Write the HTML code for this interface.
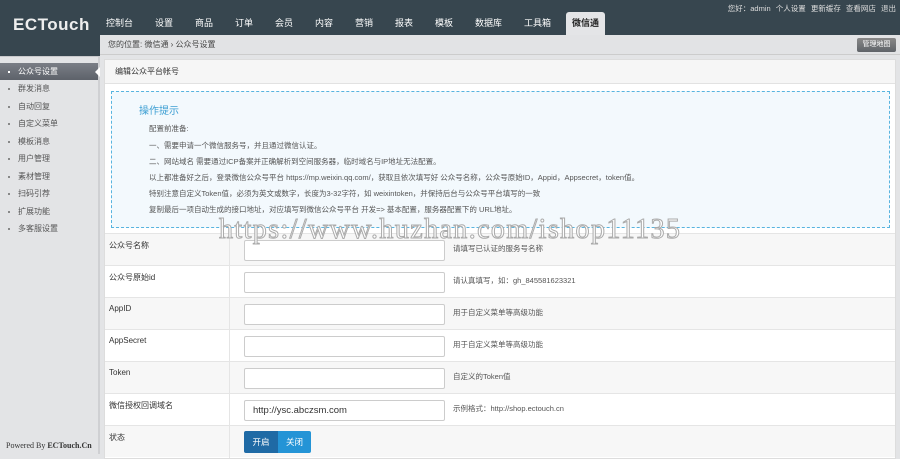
<!DOCTYPE html>
<html><head><meta charset="utf-8"><style>
*{margin:0;padding:0;box-sizing:border-box}
body{width:900px;height:454px;overflow:hidden;background:#e3e4e6;font-family:"Liberation Sans","Noto Sans CJK SC",sans-serif;font-size:8px;color:#444;position:relative}
.top{position:absolute;left:0;top:0;width:900px;height:35px;background:#37464f}
.topl{position:absolute;left:0;top:0;width:100px;height:56px;background:#37464f}
.logo{position:absolute;left:13px;top:15px;color:#eee;font-size:17px;font-weight:bold;letter-spacing:0.5px}
.nav{position:absolute;left:106px;top:16px;color:#fff;font-size:9px}
.nav span{position:absolute;white-space:nowrap}
.tab{position:absolute;left:566px;top:12px;width:39px;height:23px;background:#e4e5e7;border-radius:3px 3px 0 0;color:#222;font-size:9px;font-weight:bold;text-align:center;line-height:22px}
.tr{position:absolute;right:4px;top:3px;color:#ddd;font-size:7.5px;word-spacing:3px}
.side{position:absolute;left:0;top:56px;width:100px;height:398px;background:#e3e4e6;border-right:2px solid #cfd0d3;border-top:1px solid #c8c9cc}
.side div{position:absolute;left:0;width:98px;height:17px;line-height:17px;padding-left:18px;font-size:8px;color:#555}
.side div:before{content:"";position:absolute;left:8px;top:8px;width:2px;height:2px;background:#888}
.side .act{background:linear-gradient(#7a7e86,#5d626a);color:#fff}
.side .act:before{background:#fff}
.side .act:after{content:"";position:absolute;right:-2px;top:4px;border:5px solid transparent;border-right-color:#fff}
.crumb{position:absolute;left:100px;top:35px;width:800px;height:20px;background:#e2e3e5;border-bottom:1px solid #ccc;font-size:8px;line-height:20px;padding-left:8px;color:#444}
.mapbtn{position:absolute;right:4px;top:38px;width:39px;height:14px;background:linear-gradient(#888,#5f6368);border-radius:2px;color:#fff;font-size:7px;text-align:center;line-height:14px}
.panel{position:absolute;left:104px;top:59px;width:792px;height:400px;background:#fff;border:1px solid #ddd}
.ph{height:24px;background:#f6f6f6;border-bottom:1px solid #e2e2e2;line-height:24px;padding-left:10px;font-size:8px;color:#333}
.tip{position:absolute;left:6px;top:31px;width:779px;height:137px;background:#f3f9fd;border:1px dashed #58b4df}
.tip h3{position:absolute;left:27px;top:10px;font-size:10px;font-weight:normal;color:#3d9fd3}
.tip p{position:absolute;left:37px;font-size:7.5px;color:#555;white-space:nowrap}
.wm{position:absolute;left:219px;top:214px;font-family:"Liberation Serif",serif;font-size:28px;color:#fff;-webkit-text-stroke:1px #aaa;letter-spacing:1.4px;white-space:nowrap}
.row{position:absolute;left:105px;width:790px;height:32px;border-top:1px solid #e5e5e5}
.row.g{background:#f7f7f7}
.row .l{position:absolute;left:4px;top:6px;font-size:8px;color:#333}
.row .sep{position:absolute;left:124px;top:0;width:1px;height:32px;background:#e5e5e5}
.row .in{position:absolute;left:139px;top:6px;width:201px;height:21px;border:1px solid #ccc;border-radius:2px;background:#fff;font-size:9.5px;color:#333;padding-left:8px;line-height:19px}
.row .h{position:absolute;left:348px;top:9px;font-size:7.5px;color:#555}
.sw{position:absolute;left:139px;top:5px;height:22px;width:67px;border-radius:2px;overflow:hidden;font-size:8.5px;color:#fff}
.sw span{float:left;width:34px;height:22px;line-height:22px;text-align:center;background:#1f6aa5}
.sw span+span{width:33px;background:#2494d6}
.pw{position:absolute;left:6px;top:441px;font-family:"Liberation Serif",serif;font-size:8px;color:#333}
</style></head><body>
<div class="top"></div>
<div class="topl"><div class="logo">ECTouch</div></div>
<div class="nav">
<span style="left:0">控制台</span><span style="left:49px">设置</span><span style="left:89px">商品</span><span style="left:129px">订单</span><span style="left:169px">会员</span><span style="left:209px">内容</span><span style="left:249px">营销</span><span style="left:289px">报表</span><span style="left:329px">模板</span><span style="left:369px">数据库</span><span style="left:418px">工具箱</span>
</div>
<div class="tab">微信通</div>
<div class="tr">您好：admin 个人设置 更新缓存 查看网店 退出</div>
<div class="side">
<div class="act" style="top:6px">公众号设置</div>
<div style="top:23px">群发消息</div>
<div style="top:41px">自动回复</div>
<div style="top:58px">自定义菜单</div>
<div style="top:76px">模板消息</div>
<div style="top:93px">用户管理</div>
<div style="top:111px">素材管理</div>
<div style="top:128px">扫码引荐</div>
<div style="top:146px">扩展功能</div>
<div style="top:163px">多客服设置</div>
</div>
<div class="pw">Powered By <b>ECTouch.Cn</b></div>
<div class="crumb">您的位置: 微信通 › 公众号设置</div>
<div class="mapbtn">管理地图</div>
<div class="panel">
<div class="ph">编辑公众平台帐号</div>
<div class="tip">
<h3>操作提示</h3>
<p style="top:31px">配置前准备:</p>
<p style="top:48px">一、需要申请一个微信服务号，并且通过微信认证。</p>
<p style="top:64px">二、网站域名 需要通过ICP备案并正确解析到空间服务器，临时域名与IP地址无法配置。</p>
<p style="top:80px">以上都准备好之后，登录微信公众号平台 https://mp.weixin.qq.com/，获取且依次填写好 公众号名称，公众号原始ID，Appid，Appsecret，token值。</p>
<p style="top:96px">特别注意自定义Token值，必须为英文或数字，长度为3-32字符，如 weixintoken，并保持后台与公众号平台填写的一致</p>
<p style="top:112px">复制最后一项自动生成的接口地址，对应填写到微信公众号平台 开发=> 基本配置，服务器配置下的 URL地址。</p>
</div>
</div>
<div class="row g" style="top:233px"><span class="l">公众号名称</span><i class="sep"></i><div class="in"></div><span class="h">请填写已认证的服务号名称</span></div>
<div class="row" style="top:265px"><span class="l">公众号原始id</span><i class="sep"></i><div class="in"></div><span class="h">请认真填写，如：gh_845581623321</span></div>
<div class="row g" style="top:297px"><span class="l">AppID</span><i class="sep"></i><div class="in"></div><span class="h">用于自定义菜单等高级功能</span></div>
<div class="row" style="top:329px"><span class="l">AppSecret</span><i class="sep"></i><div class="in"></div><span class="h">用于自定义菜单等高级功能</span></div>
<div class="row g" style="top:361px"><span class="l">Token</span><i class="sep"></i><div class="in"></div><span class="h">自定义的Token值</span></div>
<div class="row" style="top:393px"><span class="l">微信授权回调域名</span><i class="sep"></i><div class="in">http://ysc.abczsm.com</div><span class="h">示例格式：http://shop.ectouch.cn</span></div>
<div class="row g" style="top:425px"><span class="l">状态</span><i class="sep"></i><div class="sw"><span>开启</span><span>关闭</span></div></div>
<div class="wm">https://www.huzhan.com/ishop11135</div>
</body></html>
